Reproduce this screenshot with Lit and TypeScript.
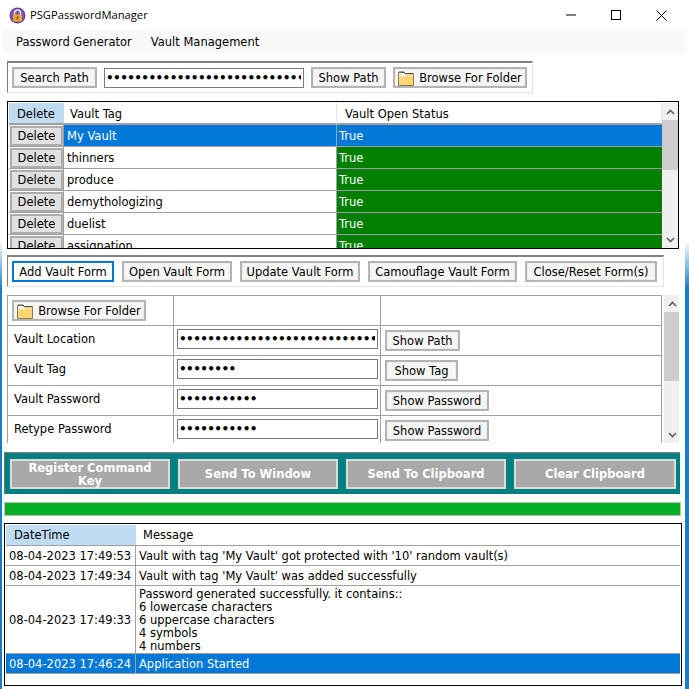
import { LitElement, html, css, svg } from "lit";
import { customElement } from "lit/decorators.js";

const folder = html`<svg class="folder" width="16" height="16" viewBox="0 0 16 16">
  <path d="M.5 2.500h5.500l1.500 1.500h8v11.500h-15z" fill="#fbd573" stroke="#8b7a4c"/>
  <path d="M1 3h5l1 1.500h8v1h-7l-1 1h-6z" fill="#f4f4f0"/>
  <path d="M1 2h5l1.500 1.500h8" fill="none" stroke="#55503f"/>
</svg>`;

const lock = svg`<svg width="17" height="17" viewBox="0 0 17 17">
  <circle cx="8.500" cy="8.500" r="8" fill="#6a3fa6"/>
  <circle cx="8.500" cy="8.500" r="6.800" fill="#7c55bd"/>
  <path d="M5.500 8V6a3 3 0 0 1 6 0v2" fill="none" stroke="#e9e2c8" stroke-width="1.500"/>
  <rect x="4" y="7.500" width="9" height="7" rx="1" fill="#eda62a"/>
  <rect x="7.800" y="9.500" width="1.400" height="3" fill="#6b4210"/>
</svg>`;

const up = html`<svg width="9" height="6" viewBox="0 0 9 6"><path d="M1 5l3.500-3.500L8 5" fill="none" stroke="#606060" stroke-width="1.600"/></svg>`;
const down = html`<svg width="9" height="6" viewBox="0 0 9 6"><path d="M1 1l3.500 3.500L8 1" fill="none" stroke="#606060" stroke-width="1.600"/></svg>`;

const vaults = ["My Vault", "thinners", "produce", "demythologizing", "duelist", "assignation"];

@customElement("app-root")
export class AppRoot extends LitElement {
  static styles = css`
    :host { display: block; width: 689px; height: 689px; overflow: hidden; }
    * { box-sizing: border-box; }
    .window {
      width: 689px; height: 689px; background: #fff; color: #000; overflow: hidden;
      border-left: 2px solid #1c5a80; border-right: 4px solid transparent;
      border-image: linear-gradient(#ffffff 0 35%, #1b7cc6 42% 100%) 1;
      border-top: 0; border-bottom: 0;
      font: 11.5px/15px "DejaVu Sans", Verdana, sans-serif;
      display: flex; flex-direction: column;
    }
    .title { height: 30px; display: flex; align-items: center; padding-left: 7px; flex: none; }
    .title .name { margin: 0 0 2px 4px; font: 11.2px "Open Sans", "Noto Sans", sans-serif; }
    .controls { margin-left: auto; display: flex; align-items: center; gap: 35px; padding-right: 18px; }
    .menu { height: 24px; background: #f9f9f9; display: flex; gap: 19px; padding: 0 0 0 14px; align-items: center; flex: none; }
    .group {
      margin: 7px 0 0 5px; height: 32px; flex: none; display: flex; align-items: center; padding: 0 4px 0 4px;
      border: 1px solid #e3e3e3; border-top: 2px solid #808080; border-left: 1px solid #808080;
    }
    .search { width: 526px; gap: 7px; }
    .search input { width: 200px; }
    .search .btn:first-child { width: 85px; }
    .tabs { width: 657px; gap: 8px; margin-top: 6px; }
    .btn {
      height: 21px; background: #f6f6f6; border: 2px solid #b4b4b4; display: inline-flex; align-items: center;
      justify-content: center; white-space: nowrap; flex: none; box-shadow: inset 0 0 0 1px #eee; padding-top: 1px;
    }
    .btn.active { border-color: #0078d7; background: #fff; box-shadow: none; }
    .folder { margin-right: 5px; margin-top: -1px; }
    input {
      display: block; height: 20px; border: 1px solid #7a7a7a; padding: 0 2px 0 1px; margin: 0; background: #fff;
      font: bold 12px "DejaVu Sans", sans-serif; letter-spacing: -0.6px; color: #000; outline: none;
    }
    .grid { margin: 8px 0 0 5px; width: 672px; height: 148px; border: 1px solid #000; flex: none; display: flex; overflow: hidden; padding: 1px 0 0 1px; }
    .grid .body { width: 653px; overflow: hidden; flex: none; }
    .row { display: grid; grid-template-columns: 55px 273px 325px; height: 22px; }
    .row > div { display: flex; align-items: center; padding: 1px 0 0 3px; border-bottom: 1px solid #a0a0a0; border-right: 1px solid #a0a0a0; }
    .row > div:first-child { padding: 0; }
    .row.head > div { border-bottom: 2px solid #a0a0a0; border-right: 1px solid #e5e5e5; padding: 3px 0 0 6px; }
    .row.head > div:last-child { padding-left: 8px; }
    .row.head > div:first-child { background: #bfdcf3; padding: 3px 0 0 8px; border-right: 0; }
    .row.sel > div { background: #0078d7; color: #fff; }
    .row.sel > div:first-child { background: #f0f0f0; }
    .row > .ok { background: #007f00; color: #fff; border-right: 0; padding-left: 2px; }
    .row.sel > .ok { background: #0078d7; }
    .del { width: 53px; height: 20px; margin-left: 1px; background: #e1e1e1; border: 2px solid #adadad; color: #000; display: flex; align-items: center; justify-content: center; padding-top: 1px; }
    .sb { width: 17px; background: #f0f0f0; display: flex; flex-direction: column; align-items: center; flex: none; }
    .sb .arrow { height: 17px; display: flex; align-items: center; justify-content: center; width: 100%; flex: none; }
    .sb .thumb { width: 100%; background: #cdcdcd; flex: none; }
    .sb .fill { flex: 1; }
    .form { margin: 8px 0 0 5px; height: 148px; width: 672px; flex: none; display: flex; overflow: hidden; }
    .ftable { width: 655px; height: 148px; overflow: hidden; flex: none; border-left: 1px solid #a0a0a0; border-right: 1px solid #a0a0a0; border-top: 1px solid #a0a0a0; }
    .frow { display: grid; grid-template-columns: 166px 207px 280px; height: 30px; }
    .frow > div { border-bottom: 1px solid #a0a0a0; border-right: 1px solid #a0a0a0; display: flex; align-items: center; padding-left: 6px; }
    .frow > div:last-child { border-right: 0; padding-left: 4px; }
    .frow .lbl { align-items: flex-start; padding-top: 6px; }
    .frow .cell-in { padding-left: 3px; align-items: flex-start; padding-top: 3px; }
    .frow .cell-in input { width: 201px; }
    .frow .cell-b { align-items: flex-start; padding-top: 4px; }
    .frow:first-child > div:first-child { padding-left: 4px; align-items: flex-start; padding-top: 4px; }
    .form .sb { margin-left: 2px; height: 148px; width: 16px; }
    .actions {
      margin: 9px 0 0 2px; width: 676px; height: 42px; background: #008080; border-top: 1px solid #808080; border-left: 1px solid #5d8080;
      flex: none; display: flex; gap: 8px; padding: 6px 4px 0 5px;
    }
    .actions div {
      width: 160px; height: 30px; background: #a9a9a9; border: 2px solid #dcdcdc; color: #fff; font-weight: bold;
      display: flex; align-items: center; justify-content: center; text-align: center; line-height: 13px; padding: 1px 10px 0;
    }
    .actions div:last-child { width: 162px; }
    .progress { margin: 8px 0 0 2px; width: 677px; height: 14px; flex: none; border: 1px solid #bcbcbc; background: #06b025; }
    .log { margin: 7px 0 0 2px; width: 678px; height: 163px; flex: none; border: 1px solid #000; padding: 1px; overflow: hidden; }
    .lrow { display: grid; grid-template-columns: 130px 1fr; border-bottom: 1px solid #a0a0a0; min-height: 20px; line-height: 13px; }
    .lrow > div { display: flex; align-items: center; padding: 1px 0 0 3px; white-space: pre-line; }
    .lrow > div:first-child { border-right: 1px solid #a0a0a0; white-space: nowrap; }
    .lrow.head { height: 21px; }
    .lrow.head > div:first-child { background: #bfdcf3; padding-left: 8px; border-right: 0; }
    .lrow.head > div:last-child { padding-left: 7px; }
    .lrow.multi > div:last-child { padding: 2px 0 0 3px; }
    .lrow.sel > div { background: #0078d7; color: #fff; }
  `;

  private scrollbar(thumb: number) {
    return html`<div class="sb">
      <div class="arrow">${up}</div>
      <div class="thumb" style="height:${thumb}px"></div>
      <div class="fill"></div>
      <div class="arrow">${down}</div>
    </div>`;
  }

  render() {
    return html`<div class="window">
      <div class="title">
        ${lock}<span class="name">PSGPasswordManager</span>
        <div class="controls">
          <svg width="10" height="10" viewBox="0 0 10 10"><path d="M0 5h10" stroke="#000"/></svg>
          <svg width="10" height="10" viewBox="0 0 10 10"><rect x=".5" y=".5" width="9" height="9" fill="none" stroke="#000"/></svg>
          <svg width="11" height="11" viewBox="0 0 11 11"><path d="M.5.5l10 10M10.500.5l-10 10" stroke="#000" fill="none"/></svg>
        </div>
      </div>
      <div class="menu"><span>Password Generator</span><span>Vault Management</span></div>

      <div class="group search">
        <div class="btn">Search Path</div>
        <input type="password" value="CUsersPublicDocumentsVaultsMyVault" readonly />
        <div class="btn" style="width:75px">Show Path</div>
        <div class="btn" style="width:134px">${folder}Browse For Folder</div>
      </div>

      <div class="grid">
        <div class="body">
          <div class="row head"><div>Delete</div><div>Vault Tag</div><div>Vault Open Status</div></div>
          ${vaults.map(
            (v, i) => html`<div class="row ${i === 0 ? "sel" : ""}">
              <div><span class="del">Delete</span></div>
              <div>${v}</div>
              <div class="ok">True</div>
            </div>`
          )}
        </div>
        ${this.scrollbar(50)}
      </div>

      <div class="group tabs">
        <div class="btn active" style="width:102px">Add Vault Form</div>
        <div class="btn" style="width:110px">Open Vault Form</div>
        <div class="btn" style="width:120px">Update Vault Form</div>
        <div class="btn" style="width:149px">Camouflage Vault Form</div>
        <div class="btn" style="width:132px">Close/Reset Form(s)</div>
      </div>

      <div class="form">
        <div class="ftable">
          <div class="frow">
            <div><div class="btn" style="width:134px">${folder}Browse For Folder</div></div><div></div><div></div>
          </div>
          <div class="frow">
            <div class="lbl">Vault Location</div>
            <div class="cell-in"><input type="password" value="CUsersPublicDocumentsVaultsMyVault" readonly /></div>
            <div class="cell-b"><div class="btn" style="width:75px">Show Path</div></div>
          </div>
          <div class="frow">
            <div class="lbl">Vault Tag</div>
            <div class="cell-in"><input type="password" value="My Vault" readonly /></div>
            <div class="cell-b"><div class="btn" style="width:73px">Show Tag</div></div>
          </div>
          <div class="frow">
            <div class="lbl">Vault Password</div>
            <div class="cell-in"><input type="password" value="abcdefghijk" readonly /></div>
            <div class="cell-b"><div class="btn" style="width:104px">Show Password</div></div>
          </div>
          <div class="frow">
            <div class="lbl">Retype Password</div>
            <div class="cell-in"><input type="password" value="abcdefghijk" readonly /></div>
            <div class="cell-b"><div class="btn" style="width:104px">Show Password</div></div>
          </div>
        </div>
        ${this.scrollbar(69)}
      </div>

      <div class="actions">
        <div>Register Command Key</div>
        <div>Send To Window</div>
        <div>Send To Clipboard</div>
        <div>Clear Clipboard</div>
      </div>

      <div class="progress"></div>

      <div class="log">
        <div class="lrow head"><div>DateTime</div><div>Message</div></div>
        <div class="lrow"><div>08-04-2023 17:49:53</div><div>Vault with tag 'My Vault' got protected with '10' random vault(s)</div></div>
        <div class="lrow"><div>08-04-2023 17:49:34</div><div>Vault with tag 'My Vault' was added successfully</div></div>
        <div class="lrow multi"><div>08-04-2023 17:49:33</div><div>Password generated successfully. it contains::
6 lowercase characters
6 uppercase characters
4 symbols
4 numbers</div></div>
        <div class="lrow sel"><div>08-04-2023 17:46:24</div><div>Application Started</div></div>
      </div>
    </div>`;
  }
}
